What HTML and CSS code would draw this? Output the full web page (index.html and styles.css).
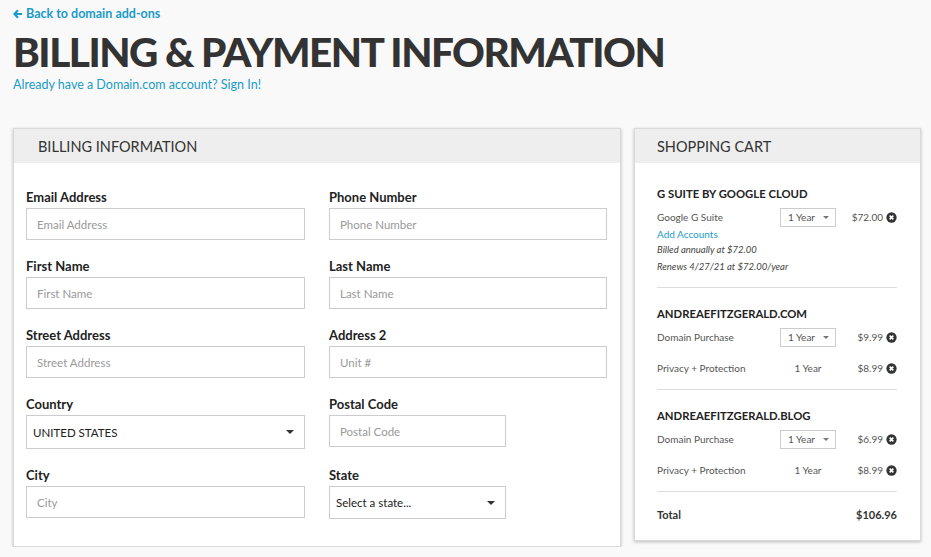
FILE: index.html
```html
<!DOCTYPE html>
<html lang="en">

<head>
    <meta charset="UTF-8">
    <meta name="viewport" content="width=device-width, initial-scale=1.0">
    <title>Billing &amp; Payment Information</title>
    <link rel="stylesheet" href="styles.css">
</head>

<body>
    <a class="back-link" href="#">
        <svg width="10" height="10" viewBox="0 0 10 10">
            <path d="M5 1.2 L1.4 5 L5 8.8 M1.6 5 H9" fill="none" stroke="currentColor" stroke-width="2.2" stroke-linejoin="miter" />
        </svg>
        Back to domain add-ons
    </a>
    <h1>Billing &amp; Payment Information</h1>
    <a class="signin" href="#">Already have a Domain.com account? Sign In!</a>

    <div class="checkout">
        <div class="card billing">
            <div class="card-header">Billing Information</div>
            <div class="form-grid">
                <div class="field">
                    <label>Email Address</label>
                    <input type="text" placeholder="Email Address">
                </div>
                <div class="field">
                    <label>Phone Number</label>
                    <input type="text" placeholder="Phone Number">
                </div>
                <div class="field">
                    <label>First Name</label>
                    <input type="text" placeholder="First Name">
                </div>
                <div class="field">
                    <label>Last Name</label>
                    <input type="text" placeholder="Last Name">
                </div>
                <div class="field">
                    <label>Street Address</label>
                    <input type="text" placeholder="Street Address">
                </div>
                <div class="field">
                    <label>Address 2</label>
                    <input type="text" placeholder="Unit #">
                </div>
                <div class="field">
                    <label>Country</label>
                    <div class="select-wrap">
                        <select class="select">
                            <option>UNITED STATES</option>
                        </select>
                        <span class="caret"></span>
                    </div>
                </div>
                <div class="field">
                    <label>Postal Code</label>
                    <input type="text" class="short" placeholder="Postal Code">
                </div>
                <div class="field">
                    <label>City</label>
                    <input type="text" placeholder="City">
                </div>
                <div class="field">
                    <label>State</label>
                    <div class="select-wrap short">
                        <select class="select">
                            <option>Select a state...</option>
                        </select>
                        <span class="caret"></span>
                    </div>
                </div>
            </div>
        </div>

        <div class="card cart">
            <div class="card-header">Shopping Cart</div>
            <div class="cart-body">
                <div class="cart-section">
                    <h3>G Suite by Google Cloud</h3>
                    <div class="cart-row">
                        <span class="item-name">Google G Suite</span>
                        <span class="term"><span class="term-box">1 Year <i class="mini-caret"></i></span></span>
                        <span class="price">$72.00</span>
                        <svg class="remove" viewBox="0 0 12 12"><circle cx="6" cy="6" r="5.6" /><path d="M4 4 L8 8 M8 4 L4 8" /></svg>
                    </div>
                    <a class="add-accounts" href="#">Add Accounts</a>
                    <div class="note">Billed annually at $72.00</div>
                    <div class="note">Renews 4/27/21 at $72.00/year</div>
                </div>

                <div class="cart-section">
                    <h3>andreaefitzgerald.com</h3>
                    <div class="cart-row">
                        <span class="item-name">Domain Purchase</span>
                        <span class="term"><span class="term-box">1 Year <i class="mini-caret"></i></span></span>
                        <span class="price">$9.99</span>
                        <svg class="remove" viewBox="0 0 12 12"><circle cx="6" cy="6" r="5.6" /><path d="M4 4 L8 8 M8 4 L4 8" /></svg>
                    </div>
                    <div class="cart-row">
                        <span class="item-name">Privacy + Protection</span>
                        <span class="term">1 Year</span>
                        <span class="price">$8.99</span>
                        <svg class="remove" viewBox="0 0 12 12"><circle cx="6" cy="6" r="5.6" /><path d="M4 4 L8 8 M8 4 L4 8" /></svg>
                    </div>
                </div>

                <div class="cart-section">
                    <h3>andreaefitzgerald.blog</h3>
                    <div class="cart-row">
                        <span class="item-name">Domain Purchase</span>
                        <span class="term"><span class="term-box">1 Year <i class="mini-caret"></i></span></span>
                        <span class="price">$6.99</span>
                        <svg class="remove" viewBox="0 0 12 12"><circle cx="6" cy="6" r="5.6" /><path d="M4 4 L8 8 M8 4 L4 8" /></svg>
                    </div>
                    <div class="cart-row">
                        <span class="item-name">Privacy + Protection</span>
                        <span class="term">1 Year</span>
                        <span class="price">$8.99</span>
                        <svg class="remove" viewBox="0 0 12 12"><circle cx="6" cy="6" r="5.6" /><path d="M4 4 L8 8 M8 4 L4 8" /></svg>
                    </div>
                </div>

                <div class="cart-total">
                    <span>Total</span>
                    <span>$106.96</span>
                </div>
            </div>
        </div>
    </div>
</body>

</html>
```

FILE: styles.css
```css
body {
    font-family: Lato, "Open Sans", sans-serif;
    background-color: #f9f9f9;
    color: #333;
    margin: 0;
    padding: 6px 10px 0 13px;
}

a {
    color: #1a9bc8;
    text-decoration: none;
}

.back-link {
    display: flex;
    align-items: center;
    gap: 3px;
    font-size: 12.5px;
    font-weight: bold;
    line-height: 16px;
}

h1 {
    margin: 7px 0 0;
    font-size: 40.5px;
    line-height: 45px;
    font-weight: 900;
    text-transform: uppercase;
    color: #333;
    letter-spacing: -1.5px;
}

.signin {
    display: block;
    font-size: 12.5px;
    line-height: 16px;
    margin-top: 3px;
}

.checkout {
    display: flex;
    align-items: flex-start;
    gap: 13px;
    margin-top: 35px;
}

.card {
    background-color: #fff;
    border: 1px solid #d9d9d9;
    box-shadow: 0 1px 3px rgba(0, 0, 0, 0.25);
}

.billing {
    width: 606px;
}

.cart {
    width: 285px;
}

.card-header {
    height: 34px;
    line-height: 35px;
    background-color: #eeeeee;
    padding-left: 24px;
    font-size: 14.5px;
    text-transform: uppercase;
    color: #333;
}

.cart .card-header {
    padding-left: 22px;
}

/* formulario */
.form-grid {
    display: grid;
    grid-template-columns: 279px 278px;
    column-gap: 24px;
    row-gap: 18px;
    padding: 26px 13px 27px 12px;
}

.field label {
    display: block;
    font-size: 13px;
    font-weight: bold;
    line-height: 16px;
    margin-bottom: 3px;
    color: #222;
}

.field input,
.select {
    box-sizing: border-box;
    width: 100%;
    height: 32px;
    border: 1px solid #cccccc;
    border-radius: 0;
    padding: 0 10px;
    font-family: Lato, sans-serif;
    font-size: 11.5px;
    color: #333;
    background-color: #fff;
    outline: none;
}

.field input::placeholder {
    color: #999;
}

.field input.short,
.select-wrap.short {
    width: 177px;
}

.select-wrap {
    position: relative;
}

.select {
    -webkit-appearance: none;
    appearance: none;
    height: 34px;
    padding-left: 6px;
    color: #222;
}

.select-wrap.short .select {
    height: 33px;
}

.caret {
    position: absolute;
    right: 11px;
    top: 15px;
    border-left: 4px solid transparent;
    border-right: 4px solid transparent;
    border-top: 4px solid #333;
}

/* carrito */
.cart-body {
    padding: 5px 23px 0 22px;
}

.cart-section {
    padding: 18px 0 11px;
    border-bottom: 1px solid #dddddd;
}

.cart-section:first-child {
    padding-bottom: 12px;
}

.cart-section h3 {
    margin: 0 0 5px;
    font-size: 11.3px;
    line-height: 16px;
    font-weight: bold;
    text-transform: uppercase;
    color: #222;
}

.cart-row {
    display: flex;
    align-items: center;
    height: 20px;
    font-size: 10px;
    color: #555;
}

.cart-row + .cart-row {
    margin-top: 11px;
}

.item-name {
    flex: 1;
}

.term {
    width: 56px;
    text-align: center;
}

.term-box {
    display: flex;
    align-items: center;
    justify-content: space-between;
    box-sizing: border-box;
    height: 19px;
    padding: 0 6px 0 7px;
    border: 1px solid #cccccc;
}

.mini-caret {
    border-left: 3px solid transparent;
    border-right: 3px solid transparent;
    border-top: 3px solid #777;
}

.price {
    width: 47px;
    text-align: right;
}

.remove {
    width: 11px;
    height: 11px;
    margin-left: 3px;
}

.remove circle {
    fill: #333;
}

.remove path {
    stroke: #fff;
    stroke-width: 1.8;
}

.add-accounts {
    display: block;
    font-size: 10px;
    line-height: 14px;
}

.note {
    font-size: 9.5px;
    font-style: italic;
    line-height: 17px;
    color: #444;
}

.cart-total {
    display: flex;
    justify-content: space-between;
    padding: 15px 0 17px;
    font-size: 11px;
    line-height: 16px;
    font-weight: bold;
    color: #333;
}
```
